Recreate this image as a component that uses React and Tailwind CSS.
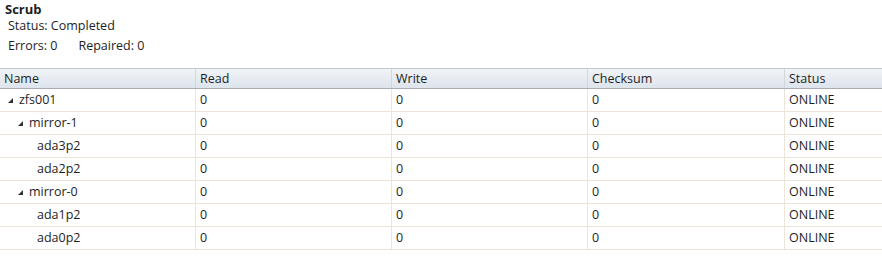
import React from 'react';

const rows = [
    { name: 'zfs001', level: 0, expand: true },
    { name: 'mirror-1', level: 1, expand: true },
    { name: 'ada3p2', level: 2 },
    { name: 'ada2p2', level: 2 },
    { name: 'mirror-0', level: 1, expand: true },
    { name: 'ada1p2', level: 2 },
    { name: 'ada0p2', level: 2 },
];

const indent = ['pl-[8px]', 'pl-[18px]', 'pl-[37px]'];

function Arrow() {
    return (
        <svg width="5" height="5" viewBox="0 0 5 5" className="mr-[6px] shrink-0">
            <polygon points="5,0 5,5 0,5" fill="#333" />
        </svg>
    );
}

export default function App() {
    return (
        <div className="w-[882px] h-[262px] bg-white text-[12.5px] text-[#1e1e1e] font-['Open_Sans','Liberation_Sans',sans-serif] overflow-hidden">
            <div className="pl-[5px] pt-[1px] font-bold text-[13px] leading-[16px]">Scrub</div>
            <div className="pl-[8px] leading-[18px]">Status: Completed</div>
            <div className="pl-[8px] mt-[2px] leading-[18px] flex gap-[21px]">
                <span>Errors: 0</span>
                <span>Repaired: 0</span>
            </div>

            <div className="mt-[13px]">
                {/* header */}
                <div className="flex h-[21px] border-t border-[#c3c6ca] border-b border-b-[#a9adb2] bg-gradient-to-b from-[#f1f4f8] to-[#dde4ec] leading-[19px]">
                    <div className="w-[196px] border-r border-[#d3d7dc] pl-[4px]">Name</div>
                    <div className="w-[196px] border-r border-[#d3d7dc] pl-[4px]">Read</div>
                    <div className="w-[196px] border-r border-[#d3d7dc] pl-[4px]">Write</div>
                    <div className="w-[197px] border-r border-[#d3d7dc] pl-[4px]">Checksum</div>
                    <div className="flex-1 pl-[4px]">Status</div>
                </div>
                {rows.map((r) => (
                    <div key={r.name} className="flex h-[23px] border-b border-[#ede4d9] leading-[22px]">
                        <div className={`w-[196px] border-r border-[#ede4d9] flex items-center ${r.expand ? indent[r.level] : indent[2]}`}>
                            {r.expand && <Arrow />}
                            <span>{r.name}</span>
                        </div>
                        <div className="w-[196px] border-r border-[#ede4d9] pl-[4px]">0</div>
                        <div className="w-[196px] border-r border-[#ede4d9] pl-[4px]">0</div>
                        <div className="w-[197px] border-r border-[#ede4d9] pl-[4px]">0</div>
                        <div className="flex-1 pl-[4px]">ONLINE</div>
                    </div>
                ))}
            </div>
        </div>
    );
}
